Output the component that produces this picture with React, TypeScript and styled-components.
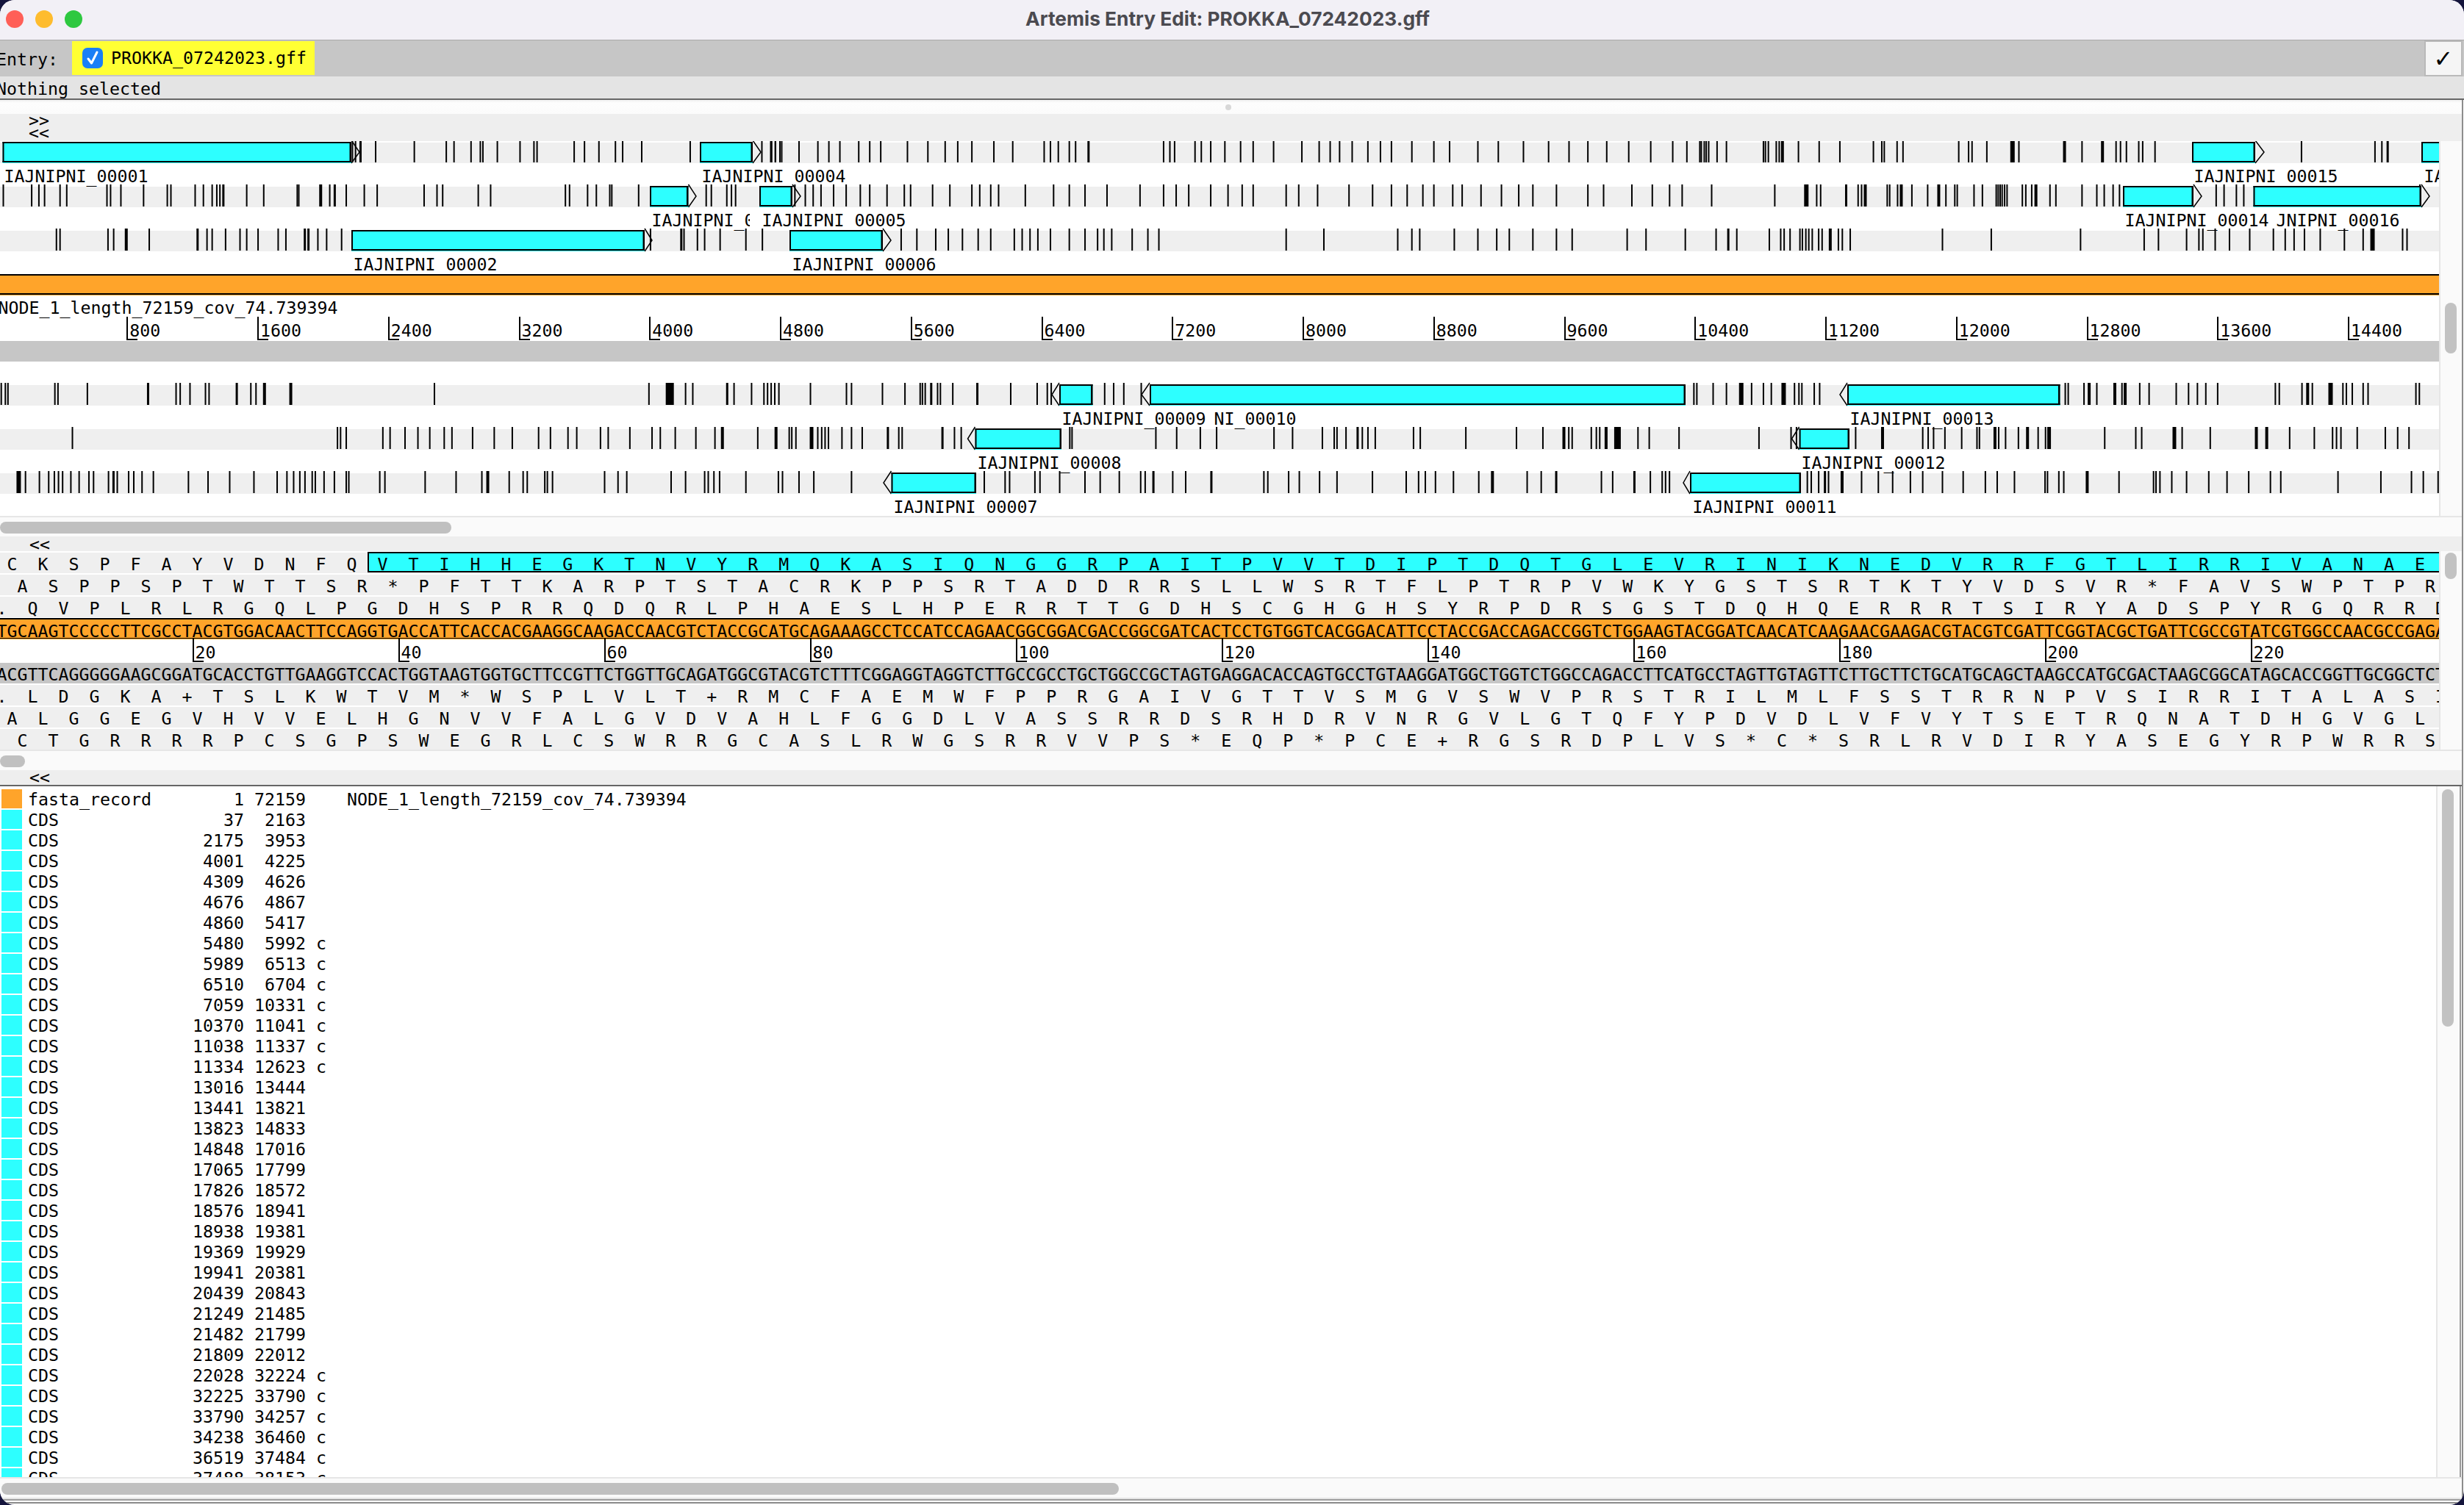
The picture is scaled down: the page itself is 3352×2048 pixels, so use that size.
import React from "react";
import styled, { createGlobalStyle } from "styled-components";

/* ---------- data ---------- */
type Bar = number | [number, number];
type Gene = { x1: number; x2: number; tip: number };
type Label = { text: string; x: number; clip?: number };

const S1 = 1568 / 1100;
const S2 = 1568 / 1052;
const S9 = 1568 / 1200;
const SM = 3352 / 1568;
const map = (bars: Bar[], f: (v: number) => number): Bar[] =>
  bars.map((b) => (typeof b === "number" ? f(b) : [f(b[0]), b[1]]));
const a = (bars: Bar[]) => map(bars, (v) => v / S1);
const b9 = (bars: Bar[]) => map(bars, (v) => 1100 + v / S9);
const c = (bars: Bar[]) => map(bars, (v) => 2300 + v / S2);
const m = (bars: Bar[]) => map(bars, (v) => v * SM);

const forwardTracks: { bars: Bar[]; genes: Gene[]; labels: Label[] }[] = [
  {
    bars: [
      ...a([682, 688, [697, 3], 727, 802, 864, 879, 912, 930, 935, 963, 1007, 1034, 1040, 1112, 1132, 1160, 1192, 1206, 1243, 1337, 1476, 1495, 1502, 1511]),
      ...m([490, 493, 497, 508, 520, 527, 534, 546, 553, 560, 577, 590, 601, 609, 618, 632, 644, 664, 668, 673, 680, 684, [692, 3], 740, 744, 747, 760, 764, 770, 779, 789, 797, 810, 828, 839, 846, 852, 860, 870, 878, 885, 898, 912, 922, 940, 953, 969, 985, 998, 1010, 1022, 1036, 1050, 1064, 1073]),
      ...c([17, 20, 26, 30, 35, 52, 71, 146, 150, 156, 172, 178, [183, 4], 217, 259, 301, 369, 386, 391, 417, 429, 542, 562, 569, 599, [648, 6], 664, [755, 4], 792, [832, 4], 861, 870, 882, 907, 915, 940, 1237, 1386, 1400, [1411, 3]]),
    ],
    genes: [
      { x1: 3.5, x2: 478, tip: 489 },
      { x1: 952, x2: 1024, tip: 1035 },
      { x1: 2982, x2: 3068, tip: 3080 },
      { x1: 3294, x2: 3340, tip: 3352 },
    ],
    labels: [
      { text: "IAJNIPNI_00001", x: 4 },
      { text: "IAJNIPNI_00004", x: 953 },
      { text: "IAJNIPNI_00015", x: 2983 },
      { text: "IAJNIPNI_00017", x: 3296 },
    ],
  },
  {
    bars: [
      ...a([5, 60, 74, 85, 115, 128, 206, 213, 233, 277, 323, 330, 377, 393, 410, 419, 425, [431, 3], 477, 510, 575, 578, [619, 4], 638, [647, 3], 670, 705, 730, 821, 846, 857, 926, 950, 1095, 1103, 1138, 1155, 1181, 1185, 1237, 1368, 1378, 1408, 1417, 1425, 1540]),
      ...m([512, 517, 522, 530, 538, 547, 553, 564, 575, 579, 593, 604, 618, 623, 630, 635, 652, 670, 680, 690, 704, 725, 740, 748, 756, 770, 781, 790, 797, 818, 826, 838, 858, 873, 885, 895, 905, 912, 924, 930, 942, 955, 966, 975, 990, 1010, 1020, 1038, 1051, 1062, 1070]),
      ...c([41, 169, [230, 6], 254, 262, [313, 3], 338, 345, [351, 4], 397, 402, 418, [424, 4], 447, 479, [500, 4], 516, 534, 539, 573, 590, 618, 622, 626, 630, 635, 640, 671, 678, 690, [697, 4], 727, 739, 792, 822, 837, 855, 868, 1064, 1080, 1105, 1120, 1477]),
    ],
    genes: [
      { x1: 884, x2: 936.5, tip: 947 },
      { x1: 1033, x2: 1078, tip: 1089 },
      { x1: 2888, x2: 2984, tip: 2995 },
      { x1: 3065.5, x2: 3294, tip: 3305 },
    ],
    labels: [
      { text: "IAJNIPNI_00003", x: 885, clip: 133 },
      { text: "IAJNIPNI_00005", x: 1035 },
      { text: "IAJNIPNI_00014", x: 2889 },
      { text: "JNIPNI_00016", x: 3095 },
    ],
  },
  {
    bars: [
      ...a([108, 115, 208, 219, [242, 4], 288, [381, 3], 400, 410, 436, 464, 477, 499, 538, 553, [589, 3], [596, 3], 615, 632, 661, 1260, [1319, 3], 1325, 1351, 1365, 1395, 1445, 1477]),
      ...m([573, 583, 595, 603, 612, 622, 630, 645, 650, 655, 660, 668, 680, 690, 698, 702, 707, 720, 730, 737, 818, 842, 889, 898, 903, 925, 940, 952, 960, 975, 990, 1000, 1035, 1047, 1072]),
      ...c([50, [74, 3], 92, 158, 181, 188, 200, 220, 225, 232, 238, 245, 258, 265, [280, 4], 298, 306, 322, 509, 608, 789, 918, 947, 1004, 1029, 1037, 1062, 1091, 1132, 1180, 1204, 1222, 1243, 1275, 1324, 1362, [1378, 6], 1442, 1451]),
    ],
    genes: [
      { x1: 478, x2: 877, tip: 887 },
      { x1: 1074, x2: 1201, tip: 1212 },
    ],
    labels: [
      { text: "IAJNIPNI_00002", x: 479 },
      { text: "IAJNIPNI_00006", x: 1076 },
    ],
  },
];

const reverseTracks: { bars: Bar[]; genes: Gene[]; labels: Label[] }[] = [
  {
    bars: [
      ...a([1, 9, 14, 105, 111, 168, [285, 3], 340, 348, 367, 397, 404, [457, 3], 485, 495, [510, 4], [561, 4], 841, 1257, [1291, 11], 1328, 1342, [1408, 3], 1422, 1456, 1480, 1487, 1494, 1501, 1509]),
      ...b9([2, 66, 75, 130, 170, 197, 201, 206, [216, 3], 228, 233, 255, [298, 3], 358, 405, 423, 430, 525, 541, 559, 590]),
      ...c([5, 11, 44, 71, [98, 6], 122, 146, 162, [184, 6], 209, 218, 224, 249, 260, 758, 764, 796, [805, 4], 822, [857, 4], 873, [878, 4], 909, 928, 983, 1008, 1026, 1043, 1067, 1184, 1192, 1238, [1248, 4], 1259, [1293, 6], 1321, 1328, 1340, 1362, 1372, 1469, 1476]),
    ],
    genes: [
      { x1: 1441, x2: 1486.5, tip: 1431 },
      { x1: 1564, x2: 2293, tip: 1553 },
      { x1: 2513, x2: 2802.5, tip: 2503 },
    ],
    labels: [
      { text: "IAJNIPNI_00009", x: 1443 },
      { text: "NI_00010", x: 1650 },
      { text: "IAJNIPNI_00013", x: 2515 },
    ],
  },
  {
    bars: [
      ...a([139, 653, 659, 670, 741, 755, 784, 809, 832, 860, 875, 915, 957, 992, 1043, 1066, 1100, 1117, 1163, 1178, 1220, 1263, 1279, 1308, 1348, 1385, [1398, 4], 1468, [1502, 4], 1529, 1534, 1542]),
      ...b9([[2, 5], 15, 22, 28, 34, 58, 75, 94, [139, 3], 159, 165, [236, 3], 258, 270, 463, 467, 616, 653, 695, 724, 826, 859, 912, 933, 938, 954, [974, 3], 983, 993, 1006, 1074, 1086, 1167, 1257, 1304, [1340, 4], 1350, 1356, 1390, 1399, 1405, [1415, 4], [1432, 9], 1473, 1493, 1546]),
      ...c([137, 202, 213, 333, [386, 4], 469, 480, 491, 514, 548, 579, 584, [614, 4], 623, 637, 663, [680, 4], 703, 718, [723, 5], 838, 901, 913, [977, 5], 995, 1052, [1144, 4], [1165, 4], 1213, 1263, 1300, 1308, 1317, 1350, 1407, 1432, 1455]),
    ],
    genes: [
      { x1: 1326.5, x2: 1444, tip: 1316.5 },
      { x1: 2447.6, x2: 2516, tip: 2437.5 },
    ],
    labels: [
      { text: "IAJNIPNI_00008", x: 1328 },
      { text: "IAJNIPNI_00012", x: 2449 },
    ],
  },
  {
    bars: [
      ...a([[32, 6], 48, 75, 93, 104, 112, 120, 136, 152, 171, 180, 209, [218, 3], 226, 248, 258, 274, 296, 364, 402, 444, 491, 536, 555, 568, 580, 590, 604, 610, 627, 647, 670, 675, 735, 745, 823, 883, 933, [943, 4], 986, 1013, 1021, 1055, 1060, 1070, 1171, 1197, 1214, 1300, 1328, 1365, 1372, 1383, 1394, 1445, 1508, 1516, 1548]),
      ...b9([8, 75, 311, 348, 356, 401, 410, 445, 490, 517, 551, 589, 597, [611, 3], 646, 669, [714, 3], 808, 815, 852, 871, 907, 938, 1001, 1061, 1083, 1095, 1113, 1145, 1190, [1213, 4], 1276, 1301, [1327, 3], 1408, 1428, [1466, 3], 1495, 1516, 1522, 1529]),
      ...c([235, 243, 258, [270, 3], 278, [304, 4], 345, 379, 408, 444, 469, 509, 551, 596, 620, 655, 717, 722, 745, 755, [801, 4], 867, 937, 942, 950, 974, 1004, 1049, 1086, 1130, 1174, 1195, 1311, 1398, 1460, 1484, 1514]),
    ],
    genes: [
      { x1: 1212.5, x2: 1328, tip: 1202 },
      { x1: 2299, x2: 2450, tip: 2290 },
    ],
    labels: [
      { text: "IAJNIPNI_00007", x: 1214 },
      { text: "IAJNIPNI_00011", x: 2301 },
    ],
  },
];

const DNA =
  "TGCAAGTCCCCCTTCGCCTACGTGGACAACTTCCAGGTGACCATTCACCACGAAGGCAAGACCAACGTCTACCGCATGCAGAAAGCCTCCATCCAGAACGGCGGACGACCGGCGATCACTCCTGTGGTCACGGACATTCCTACCGACCAGACCGGTCTGGAAGTACGGATCAACATCAAGAACGAAGACGTACGTCGATTCGGTACGCTGATTCGCCGTATCGTGGCCAACGCCGAGAT";
const COMP: Record<string, string> = { A: "T", T: "A", G: "C", C: "G" };
const complement = DNA.split("").map((n) => COMP[n]).join("");
const BASES = "TCAG";
const TABLE = "FFLLSSSSYY#+CC*WLLLLPPPPHHQQRRRRIIIMTTTTNNKKSSRRVVVVAAAADDEEGGGG";
const codon = (s: string) =>
  TABLE[BASES.indexOf(s[0]) * 16 + BASES.indexOf(s[1]) * 4 + BASES.indexOf(s[2])];
const revcomp = (s: string) => s.split("").reverse().map((n) => COMP[n]).join("");

function aaRow(frame: number, reverse: boolean): string {
  let out = frame === 2 ? ". " : " ".repeat(frame);
  for (let i = frame; i + 3 <= DNA.length; i += 3) {
    const t = DNA.slice(i, i + 3);
    out += " " + codon(reverse ? revcomp(t) : t) + " ";
  }
  return out;
}

const cds: [number, number, boolean][] = [
  [37, 2163, false], [2175, 3953, false], [4001, 4225, false], [4309, 4626, false],
  [4676, 4867, false], [4860, 5417, false], [5480, 5992, true], [5989, 6513, true],
  [6510, 6704, true], [7059, 10331, true], [10370, 11041, true], [11038, 11337, true],
  [11334, 12623, true], [13016, 13444, false], [13441, 13821, false], [13823, 14833, false],
  [14848, 17016, false], [17065, 17799, false], [17826, 18572, false], [18576, 18941, false],
  [18938, 19381, false], [19369, 19929, false], [19941, 20381, false], [20439, 20843, false],
  [21249, 21485, false], [21482, 21799, false], [21809, 22012, false], [22028, 32224, true],
  [32225, 33790, true], [33790, 34257, true], [34238, 36460, true], [36519, 37484, true],
  [37488, 38153, true],
];

const featureLine = (name: string, s: number, e: number, comp: boolean, note = "") =>
  `${name.padEnd(16)}${String(s).padStart(5)} ${String(e).padStart(5)} ${comp ? "c" : " "}  ${note}`;

const CYAN = "#2dffff";
const ORANGE = "#ffa42a";
const MONO = `"DejaVu Sans Mono", monospace`;

/* ---------- styles ---------- */
const Global = createGlobalStyle`
  html, body { margin: 0; padding: 0; background: #14143c; }
`;

const Window = styled.div`
  width: 3352px;
  height: 2048px;
  display: flex;
  flex-direction: column;
  overflow: hidden;
  border-radius: 20px;
  background: #fff;
  color: #000;
  font-family: ${MONO};
  font-size: 23.25px;
  font-variant-ligatures: none;
`;

const TitleBar = styled.div`
  height: 54px;
  flex: none;
  box-sizing: content-box;
  display: flex;
  align-items: center;
  justify-content: center;
  background: #f2f0f6;
  border-bottom: 1px solid #a9a9a9;
  position: relative;
`;

const Lights = styled.div`
  position: absolute;
  left: 8px;
  top: 14px;
  display: flex;
  gap: 16px;
`;

const Light = styled.span<{ $c: string }>`
  width: 24px;
  height: 24px;
  border-radius: 50%;
  background: ${(p) => p.$c};
`;

const Title = styled.div`
  font-family: Inter, sans-serif;
  font-weight: 700;
  font-size: 26.3px;
  color: #4b4a50;
  margin: 0 0 3px -12px;
`;

const EntryBar = styled.div`
  height: 49px;
  flex: none;
  display: flex;
  align-items: stretch;
  background: #c6c6c6;
`;

const EntryLabel = styled.div`
  margin-left: -5px;
  width: 103px;
  line-height: 52px;
`;

const EntryChip = styled.div`
  width: 330px;
  height: 46px;
  margin-top: 1px;
  display: flex;
  align-items: center;
  background: #ffff33;
  padding-left: 14px;
  box-sizing: border-box;
  gap: 11px;
  line-height: 50px;
`;

const CheckBox = styled.span`
  width: 28px;
  height: 28px;
  border-radius: 7px;
  background: #1a7ff6;
  display: flex;
  align-items: center;
  justify-content: center;
`;

const ConfirmButton = styled.div`
  margin-left: auto;
  margin-right: 2px;
  width: 52px;
  box-sizing: border-box;
  border: 2px solid #b9b9b9;
  background: #f5f5f5;
  display: flex;
  align-items: center;
  justify-content: center;
  font-family: "DejaVu Sans", sans-serif;
  font-size: 32px;
  font-weight: 700;
`;

const StatusBar = styled.div`
  height: 30px;
  flex: none;
  background: #e4e4e4;
  line-height: 34px;
  padding-left: 0;
  text-indent: -5px;
  border-bottom: 2px solid #666;
`;

const Body = styled.div`
  flex: none;
  height: 1904px;
  margin-right: 1px;
  border-right: 2px solid #8c8c8c;
  display: flex;
  flex-direction: column;
  min-width: 0;
`;

const Splitter = styled.div`
  height: 19px;
  flex: none;
  display: flex;
  align-items: center;
  justify-content: center;
  background: linear-gradient(#f0f0f0 0, #fdfdfd 4px, #fbfbfb 100%);
`;

const SplitDot = styled.span`
  width: 8px;
  height: 8px;
  border-radius: 50%;
  background: #d8d8d8;
  margin-left: -8px;
`;

const ArrowRow = styled.div`
  height: 37px;
  flex: none;
  background: #eeeeee;
  padding: 0 0 0 39px;
  box-sizing: border-box;
  line-height: 17px;
  white-space: pre;
`;

const PanelRow = styled.div<{ $h: number }>`
  height: ${(p) => p.$h}px;
  flex: none;
  display: flex;
`;

const Canvas = styled.div<{ $w?: number }>`
  width: ${(p) => p.$w ?? 3318}px;
  flex: none;
  overflow: hidden;
  position: relative;
`;

const TrackRow = styled.div`
  height: 60px;
`;

const TrackSvg = styled.svg`
  display: block;
  overflow: visible;
`;

const LabelRow = styled.div`
  height: 30px;
  position: relative;
`;

const GeneLabel = styled.span<{ $clipped: boolean }>`
  position: absolute;
  top: 0;
  line-height: 35px;
  white-space: pre;
  overflow: ${(p) => (p.$clipped ? "hidden" : "visible")};
`;

const StrandBar = styled.div`
  height: 28px;
  margin: 1px 0;
  box-sizing: border-box;
  background: ${ORANGE};
  border-top: 2px solid #000;
  border-bottom: 2px solid #000;
  box-shadow: 0 1px 0 ${ORANGE};
`;

const NodeName = styled.div`
  height: 29px;
  line-height: 34px;
  text-indent: -2.5px;
  white-space: pre;
`;

const Ruler = styled.div`
  height: 33px;
  position: relative;
`;

const Tick = styled.div`
  position: absolute;
  top: 0;
  width: 2px;
  height: 32px;
  background: #000;
  &::after {
    content: "";
    position: absolute;
    left: 0;
    bottom: 0;
    width: 15px;
    height: 2px;
    background: #000;
  }
`;

const TickLabel = styled.span`
  position: absolute;
  left: 4px;
  top: 0;
  line-height: 38px;
`;

const GrayStrip = styled.div`
  height: 28px;
  background: #c6c6c6;
`;

const Spacer = styled.div<{ $h: number }>`
  height: ${(p) => p.$h}px;
`;

const VScroll = styled.div<{ $inset: number }>`
  flex: 1;
  min-width: 0;
  box-sizing: border-box;
  padding-left: ${(p) => p.$inset}px;
  background: #fafafa;
  border-left: 2px solid #e6e6e6;
  overflow: hidden;
`;

const VThumb = styled.div<{ $top: number; $h: number; $w: number }>`
  margin-top: ${(p) => p.$top}px;
  height: ${(p) => p.$h}px;
  width: ${(p) => p.$w}px;
  border-radius: 8px;
  background: #c2c2c2;
`;

const HScroll = styled.div<{ $h: number; $bottom?: boolean }>`
  height: ${(p) => p.$h}px;
  flex: none;
  box-sizing: border-box;
  background: #fafafa;
  border-top: 2px solid #e6e6e6;
  ${(p) => (p.$bottom ? "border-bottom: 2px solid #e6e6e6;" : "")}
  padding-top: 6px;
`;

const HThumb = styled.div<{ $left: number; $w: number }>`
  margin-left: ${(p) => p.$left}px;
  width: ${(p) => p.$w}px;
  height: 16px;
  border-radius: 8px;
  background: #c0c0c0;
`;

const ChevronBar = styled.div<{ $lh: number }>`
  height: 20px;
  flex: none;
  background: #eeeeee;
  padding-left: 40px;
  line-height: ${(p) => p.$lh}px;
`;

const Divider = styled.div`
  height: 2px;
  flex: none;
  background: #666;
`;

const AaRow = styled.div`
  height: 28px;
  margin-top: 2px;
  background: #efefef;
  line-height: 32px;
  white-space: pre;
  text-indent: -4.5px;
  position: relative;
`;

const Letters = styled.span`
  position: relative;
`;

const CdsBand = styled.div`
  position: absolute;
  left: 499.5px;
  right: 0;
  top: -1px;
  height: 28px;
  box-sizing: border-box;
  background: ${CYAN};
  border: solid #000;
  border-width: 2px 0 2.5px 2.5px;
`;

const DnaStrand = styled.div`
  height: 28px;
  margin-top: 1px;
  box-sizing: border-box;
  background: ${ORANGE};
  border-top: 2px solid #000;
  border-bottom: 1.5px solid #000;
  box-shadow: 0 1px 0 ${ORANGE};
  line-height: 31px;
  white-space: pre;
  text-indent: -4.5px;
`;

const DnaReverse = styled.div`
  height: 28px;
  background: #c6c6c6;
  line-height: 32px;
  white-space: pre;
  text-indent: -4.5px;
`;

const ListPane = styled.div`
  width: 3314px;
  flex: none;
  box-sizing: border-box;
  padding-top: 4px;
  overflow: hidden;
  background: #fff;
`;

const ListScroll = styled(VScroll)`
  flex: none;
  width: 34px;
  border-right: 2px solid #9a9a9a;
`;

const FeatureRow = styled.div`
  height: 28px;
  display: flex;
  align-items: flex-start;
`;

const Swatch = styled.span<{ $c: string }>`
  width: 28px;
  height: 26px;
  margin: 0 8px 0 2px;
  background: ${(p) => p.$c};
  flex: none;
`;

const FeatureText = styled.span`
  line-height: 28px;
  white-space: pre;
`;

const FooterLines = styled.div`
  height: 6px;
  flex: none;
  box-sizing: border-box;
  border-top: 2px solid #9e9e9e;
  border-bottom: 2px solid #8a8a8a;
  margin-bottom: 2px;
`;

/* ---------- parts ---------- */
function Track({ bars, genes }: { bars: Bar[]; genes: Gene[] }) {
  return (
    <TrackSvg width="3318" height="30" viewBox="0 0 3318 30">
      <rect x="0" y="2" width="3318" height="28" fill="#efefef" />
      {bars.map((bar, i) => {
        const x = typeof bar === "number" ? bar : bar[0];
        const w = typeof bar === "number" ? 2 : bar[1];
        return <rect key={i} x={x} y={-1} width={w} height={30} fill="#000" />;
      })}
      {genes.map((g, i) => (
        <g key={i}>
          <polyline
            points={`${g.tip < g.x1 ? g.x1 : g.x2},-1 ${g.tip},15 ${g.tip < g.x1 ? g.x1 : g.x2},30`}
            fill="none"
            stroke="#000"
            strokeWidth="1.5"
          />
          <rect x={g.x1} y={1} width={g.x2 - g.x1} height={29} fill={CYAN} />
          <rect x={g.x1} y={1} width={g.x2 - g.x1} height={2} fill="#000" />
          <rect x={g.x1} y={27} width={g.x2 - g.x1} height={2} fill="#000" />
          <rect x={g.x1} y={1} width={2} height={28} fill="#000" />
          <rect x={g.x2 - 2.5} y={1} width={2.5} height={28} fill="#000" />
        </g>
      ))}
    </TrackSvg>
  );
}

function TrackBlock({ bars, genes, labels }: { bars: Bar[]; genes: Gene[]; labels: Label[] }) {
  return (
    <TrackRow>
      <Track bars={bars} genes={genes} />
      <LabelRow>
        {labels.map((l) => (
          <GeneLabel key={l.text} $clipped={l.clip !== undefined} style={{ left: l.x + 1.5, width: l.clip }}>
            {l.text}
          </GeneLabel>
        ))}
      </LabelRow>
    </TrackRow>
  );
}

const overviewTicks = Array.from({ length: 18 }, (_, i) => i + 1);
const seqTicks = Array.from({ length: 11 }, (_, i) => i + 1);

export default function App() {
  return (
    <Window>
      <Global />
      <TitleBar>
        <Lights>
          <Light $c="#ff5f57" />
          <Light $c="#febc2e" />
          <Light $c="#2ec840" />
        </Lights>
        <Title>Artemis Entry Edit: PROKKA_07242023.gff</Title>
      </TitleBar>

      <EntryBar>
        <EntryLabel>Entry:</EntryLabel>
        <EntryChip>
          <CheckBox>
            <svg width="20" height="22" viewBox="0 0 20 22">
              <path d="M4 12 L8.5 18 L16 3" fill="none" stroke="#fff" strokeWidth="3" strokeLinecap="round" strokeLinejoin="round" />
            </svg>
          </CheckBox>
          PROKKA_07242023.gff
        </EntryChip>
        <ConfirmButton>✓</ConfirmButton>
      </EntryBar>
      <StatusBar>Nothing selected</StatusBar>

      <Body>
        <Splitter>
          <SplitDot />
        </Splitter>
        <ArrowRow>{">>\n<<"}</ArrowRow>

        <PanelRow $h={510}>
          <Canvas>
            {forwardTracks.map((t, i) => (
              <TrackBlock key={i} {...t} />
            ))}
            <StrandBar />
            <NodeName>NODE_1_length_72159_cov_74.739394</NodeName>
            <Ruler>
              {overviewTicks.map((k) => (
                <Tick key={k} style={{ left: 177.75 * k - 5.5 }}>
                  <TickLabel>{k * 800}</TickLabel>
                </Tick>
              ))}
            </Ruler>
            <GrayStrip />
            <Spacer $h={30} />
            {reverseTracks.map((t, i) => (
              <TrackBlock key={i} {...t} />
            ))}
          </Canvas>
          <VScroll $inset={6}>
            <VThumb $top={220} $h={69} $w={16} />
          </VScroll>
        </PanelRow>
        <HScroll $h={28}>
          <HThumb $left={0} $w={614} />
        </HScroll>
        <ChevronBar $lh={22}>{"<<"}</ChevronBar>

        <PanelRow $h={270}>
          <Canvas>
            <AaRow>
              <CdsBand />
              <Letters>{aaRow(0, false)}</Letters>
            </AaRow>
            <AaRow>{aaRow(1, false)}</AaRow>
            <AaRow>{aaRow(2, false)}</AaRow>
            <DnaStrand>{DNA}</DnaStrand>
            <Ruler>
              {seqTicks.map((k) => (
                <Tick key={k} style={{ left: -18.5 + 280 * k }}>
                  <TickLabel>{k * 20}</TickLabel>
                </Tick>
              ))}
            </Ruler>
            <DnaReverse>{complement}</DnaReverse>
            <AaRow>{aaRow(2, true)}</AaRow>
            <AaRow>{aaRow(0, true)}</AaRow>
            <AaRow>{aaRow(1, true)}</AaRow>
          </Canvas>
          <VScroll $inset={6}>
            <VThumb $top={2} $h={36} $w={16} />
          </VScroll>
        </PanelRow>
        <HScroll $h={28}>
          <HThumb $left={0} $w={34} />
        </HScroll>
        <ChevronBar $lh={20}>{"<<"}</ChevronBar>
        <Divider />

        <PanelRow $h={940}>
          <ListPane>
            <FeatureRow>
              <Swatch $c={ORANGE} />
              <FeatureText>
                {featureLine("fasta_record", 1, 72159, false, "NODE_1_length_72159_cov_74.739394")}
              </FeatureText>
            </FeatureRow>
            {cds.map(([s, e, comp]) => (
              <FeatureRow key={s}>
                <Swatch $c={CYAN} />
                <FeatureText>{featureLine("CDS", s, e, comp)}</FeatureText>
              </FeatureRow>
            ))}
          </ListPane>
          <ListScroll $inset={6}>
            <VThumb $top={4} $h={323} $w={16} />
          </ListScroll>
        </PanelRow>
        <HScroll $h={30} $bottom>
          <HThumb $left={2} $w={1520} />
        </HScroll>
      </Body>
      <FooterLines />
    </Window>
  );
}
